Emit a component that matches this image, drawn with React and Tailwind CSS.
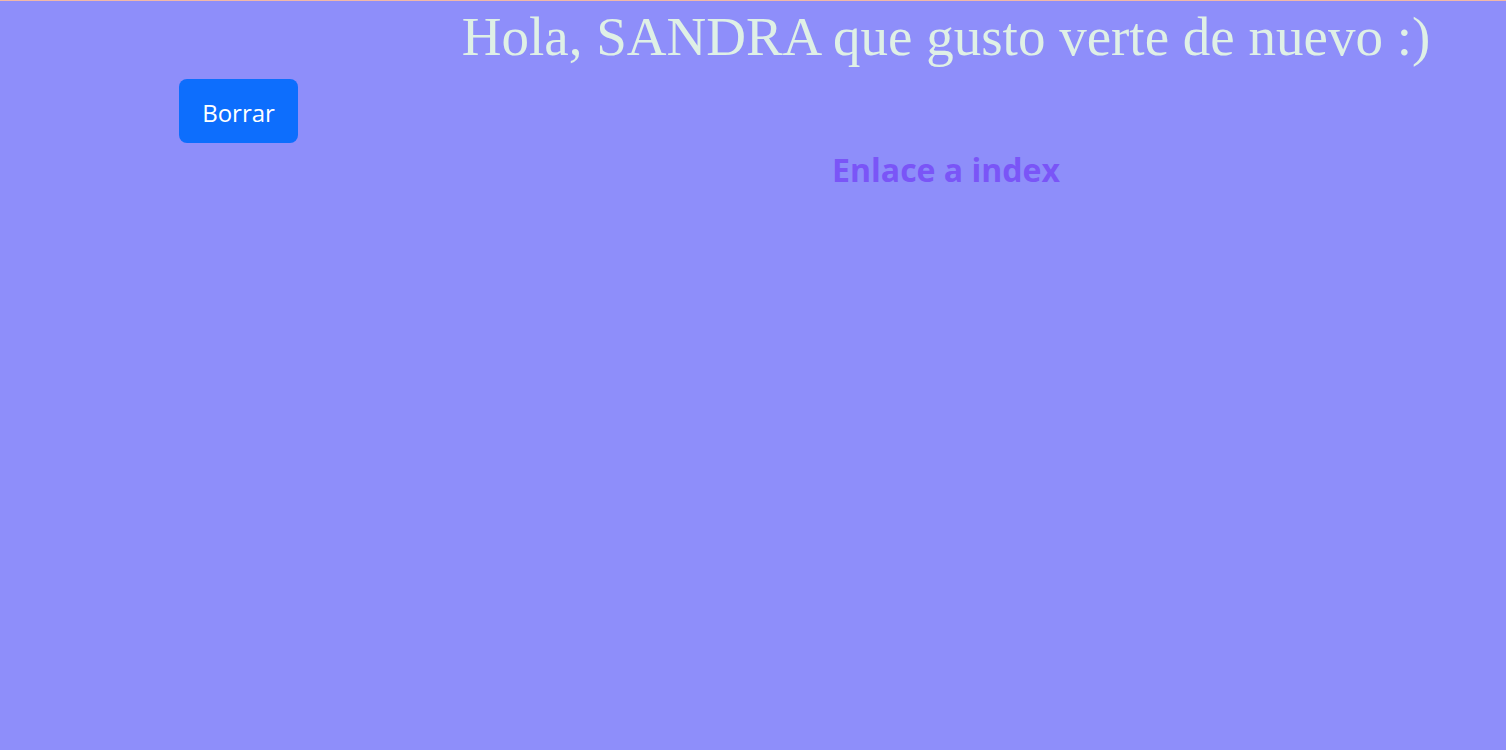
export default function App() {
  return (
    <div className="min-h-[750px] w-full bg-[#8e8efa] border-t border-[#f2b8a8]">
      <div className="flex">
        <div className="w-[386px] shrink-0 pl-[179px] pt-[78px]">
          <button className="h-[64px] w-[119px] rounded-[8px] bg-[#0d6efd] text-white text-[24px] leading-none pt-[4px]" style={{ fontFamily: '"Open Sans", "Noto Sans", sans-serif' }}>
            Borrar
          </button>
        </div>
        <div className="flex-1 flex flex-col items-center">
          <h1 className="text-[55px] leading-none mt-[8px] text-[#dff0e6] whitespace-nowrap" style={{ fontFamily: '"Liberation Serif", "Times New Roman", serif' }}>
            Hola, SANDRA que gusto verte de nuevo :)
          </h1>
          <a className="mt-[90px] text-[32px] font-bold leading-none text-[#7a55f7]" style={{ fontFamily: '"Open Sans", "Noto Sans", sans-serif' }}>
            Enlace a index
          </a>
        </div>
      </div>
    </div>
  );
}
